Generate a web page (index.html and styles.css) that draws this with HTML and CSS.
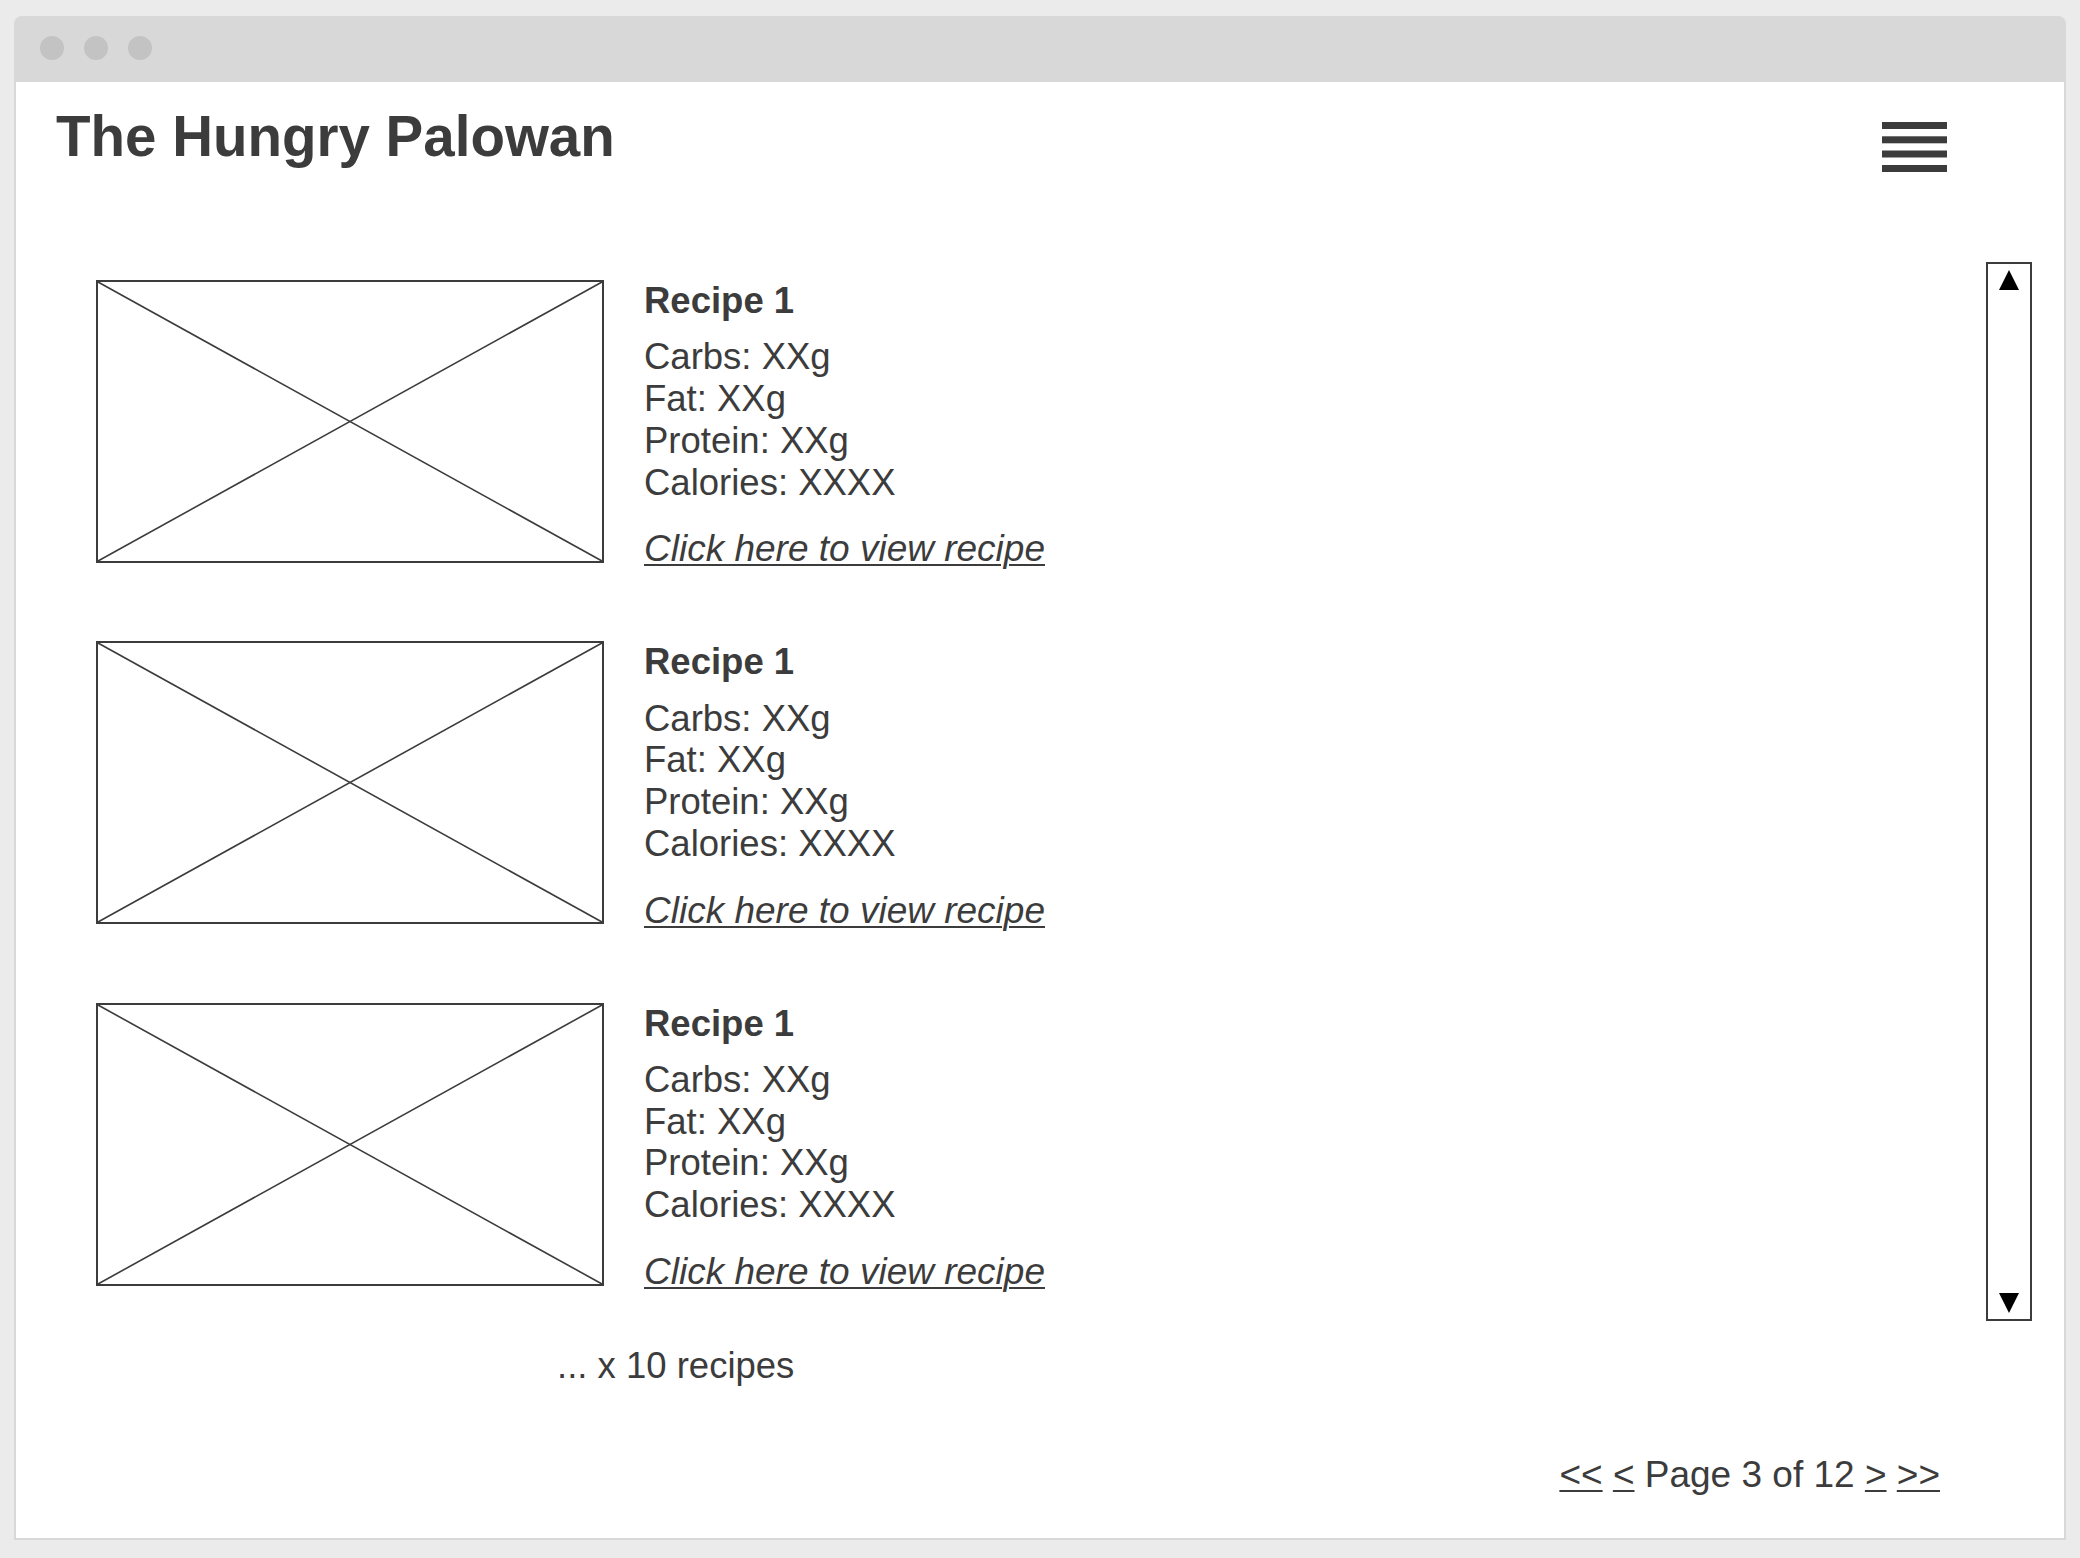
FILE: index.html
```html
<!DOCTYPE html>
<html lang="en">
<head>
<meta charset="utf-8">
<title>The Hungry Palowan</title>
<link rel="stylesheet" href="styles.css">
</head>
<body>
<div class="window">
  <div class="titlebar">
    <span class="dot"></span><span class="dot"></span><span class="dot"></span>
  </div>
  <div class="content">
    <header class="header">
      <h1 class="site-title">The Hungry Palowan</h1>
      <svg class="menu-icon" width="65" height="50" viewBox="0 0 65 50" aria-label="menu">
        <rect x="0" y="0" width="65" height="7" fill="#3c3c3c"/>
        <rect x="0" y="14.3" width="65" height="7" fill="#3c3c3c"/>
        <rect x="0" y="28.5" width="65" height="7" fill="#3c3c3c"/>
        <rect x="0" y="43" width="65" height="7" fill="#3c3c3c"/>
      </svg>
    </header>
    <main class="main">
      <div class="list">
        <article class="card">
          <svg class="thumb" width="508" height="283" viewBox="0 0 508 283" preserveAspectRatio="none">
            <rect x="1" y="1" width="506" height="281" fill="#fff" stroke="#3c3c3c" stroke-width="2"/>
            <line x1="2" y1="2" x2="506" y2="281" stroke="#3c3c3c" stroke-width="1.6"/>
            <line x1="2" y1="281" x2="506" y2="2" stroke="#3c3c3c" stroke-width="1.6"/>
          </svg>
          <div class="info">
            <h2 class="recipe-name">Recipe 1</h2>
            <div class="facts">
              <div>Carbs: XXg</div>
              <div>Fat: XXg</div>
              <div>Protein: XXg</div>
              <div>Calories: XXXX</div>
            </div>
            <a class="view-link" href="#">Click here to view recipe</a>
          </div>
        </article>
        <article class="card">
          <svg class="thumb" width="508" height="283" viewBox="0 0 508 283" preserveAspectRatio="none">
            <rect x="1" y="1" width="506" height="281" fill="#fff" stroke="#3c3c3c" stroke-width="2"/>
            <line x1="2" y1="2" x2="506" y2="281" stroke="#3c3c3c" stroke-width="1.6"/>
            <line x1="2" y1="281" x2="506" y2="2" stroke="#3c3c3c" stroke-width="1.6"/>
          </svg>
          <div class="info">
            <h2 class="recipe-name">Recipe 1</h2>
            <div class="facts">
              <div>Carbs: XXg</div>
              <div>Fat: XXg</div>
              <div>Protein: XXg</div>
              <div>Calories: XXXX</div>
            </div>
            <a class="view-link" href="#">Click here to view recipe</a>
          </div>
        </article>
        <article class="card">
          <svg class="thumb" width="508" height="283" viewBox="0 0 508 283" preserveAspectRatio="none">
            <rect x="1" y="1" width="506" height="281" fill="#fff" stroke="#3c3c3c" stroke-width="2"/>
            <line x1="2" y1="2" x2="506" y2="281" stroke="#3c3c3c" stroke-width="1.6"/>
            <line x1="2" y1="281" x2="506" y2="2" stroke="#3c3c3c" stroke-width="1.6"/>
          </svg>
          <div class="info">
            <h2 class="recipe-name">Recipe 1</h2>
            <div class="facts">
              <div>Carbs: XXg</div>
              <div>Fat: XXg</div>
              <div>Protein: XXg</div>
              <div>Calories: XXXX</div>
            </div>
            <a class="view-link" href="#">Click here to view recipe</a>
          </div>
        </article>
        <p class="more">... x 10 recipes</p>
      </div>
      <div class="scrollbar">
        <span class="arrow-up"></span>
        <span class="arrow-down"></span>
      </div>
    </main>
    <nav class="pager">
      <a href="#">&lt;&lt;</a> <a href="#">&lt;</a> Page 3 of 12 <a href="#">&gt;</a> <a href="#">&gt;&gt;</a>
    </nav>
  </div>
</div>
</body>
</html>
```

FILE: styles.css
```css
html, body {
  margin: 0;
  padding: 0;
}
body {
  background: #ebebeb;
  font-family: "Liberation Sans", Arial, sans-serif;
  color: #3c3c3c;
}
.window {
  margin: 16px 0 0 14px;
  width: 2052px;
  background: #d8d8d8;
  border-radius: 8px 8px 0 0;
  padding: 0 2px 2px 2px;
  box-sizing: border-box;
}
.titlebar {
  height: 66px;
  display: flex;
  gap: 20px;
  padding: 20px 0 0 24px;
  box-sizing: border-box;
}
.dot {
  width: 24px;
  height: 24px;
  border-radius: 50%;
  background: #c3c3c3;
}
.content {
  background: #fff;
  height: 1456px;
  display: flex;
  flex-direction: column;
}
.header {
  height: 180px;
  box-sizing: border-box;
  padding: 22px 117px 0 40px;
  display: flex;
  justify-content: space-between;
  align-items: flex-start;
}
.site-title {
  margin: 0;
  font-size: 56.5px;
  font-weight: 700;
  line-height: normal;
}
.menu-icon {
  display: block;
  margin-top: 18px;
}
.main {
  display: flex;
  padding: 0 32px 0 80px;
}
.list {
  flex: 1;
  padding-top: 18px;
  display: flex;
  flex-direction: column;
  gap: 71px;
}
.card {
  display: flex;
  gap: 40px;
  align-items: flex-start;
}
.thumb {
  display: block;
  flex: none;
}
.info {
  font-size: 36.5px;
  line-height: 41.8px;
}
.recipe-name {
  margin: 0;
  font-size: 36.5px;
  font-weight: 700;
  line-height: 41.8px;
}
.facts {
  margin-top: 14.5px;
}
.view-link {
  display: inline-block;
  margin-top: 25px;
  color: #3c3c3c;
  font-size: 37px;
  font-style: italic;
  text-decoration: underline;
  text-decoration-thickness: 2px;
  text-underline-offset: 3px;
}
.more {
  margin: -19px 0 0 461px;
  font-size: 36.5px;
  line-height: 41.3px;
}
.scrollbar {
  flex: none;
  width: 46px;
  height: 1059px;
  border: 2px solid #3c3c3c;
  box-sizing: border-box;
  display: flex;
  flex-direction: column;
  justify-content: space-between;
  align-items: center;
  padding: 6px 0 6px;
}
.arrow-up {
  width: 0;
  height: 0;
  border-left: 10px solid transparent;
  border-right: 10px solid transparent;
  border-bottom: 20px solid #000;
}
.arrow-down {
  width: 0;
  height: 0;
  border-left: 10px solid transparent;
  border-right: 10px solid transparent;
  border-top: 20px solid #000;
}
.pager {
  margin-top: 67.5px;
  padding-right: 124px;
  text-align: right;
  font-size: 37px;
  line-height: 41.3px;
}
.pager a {
  color: #3c3c3c;
  text-decoration: underline;
  text-decoration-thickness: 2px;
  text-underline-offset: 3px;
}
```
